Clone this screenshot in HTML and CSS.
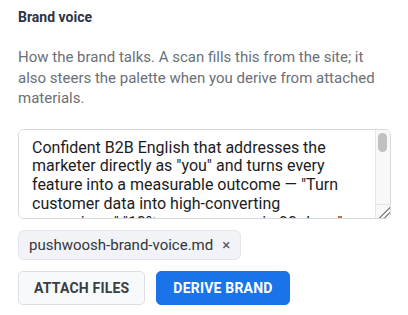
FILE: index.html
```html
<!DOCTYPE html>
<html>
<head>
    <meta charset="UTF-8">
    <title>Brand voice</title>

    <link rel="stylesheet" href="styles.css">
</head>
<body>
    <div class="field">
        <div class="label">Brand voice</div>
        <p class="hint">How the brand talks. A scan fills this from the site; it also steers the palette when you derive from attached materials.</p>
        <div class="voice">
            <textarea class="voice-text" rows="4">Confident B2B English that addresses the marketer directly as "you" and turns every feature into a measurable outcome — "Turn customer data into high-converting campaigns." "10% more revenue in 90 days." Short sentences, active verbs, no fluff.</textarea>
            <div class="scroll">
                <div class="thumb"></div>
                <div class="grip"></div>
            </div>
        </div>
        <div class="chips">
            <span class="chip">pushwoosh-brand-voice.md <span class="x">×</span></span>
        </div>
        <div class="actions">
            <button class="btn">Attach files</button>
            <button class="btn primary">Derive brand</button>
        </div>
    </div>
</body>
</html>
```

FILE: styles.css
```css
body {
    margin: 0;
    background: #fff;
    font-family: Roboto, "Liberation Sans", sans-serif;
}

.field {
    padding: 8px 17px 0 18px;
}

.label {
    font-size: 14px;
    font-weight: 700;
    color: #2d3446;
    line-height: 18px;
}

.hint {
    margin: 21px 0 0;
    font-size: 15px;
    line-height: 20.5px;
    color: #6b6f76;
}

.voice {
    display: flex;
    box-sizing: border-box;
    height: 90px;
    margin-top: 20px;
    border: 1px solid #d6d9de;
    border-radius: 6px;
    overflow: hidden;
}

.voice-text {
    flex: 1;
    min-width: 0;
    margin: 0;
    padding: 9px 12px 0 13px;
    border: none;
    outline: none;
    resize: none;
    overflow: hidden;
    font-family: Roboto, "Liberation Sans", sans-serif;
    font-size: 16px;
    line-height: 18.75px;
    color: #1c1c1e;
}

.scroll {
    width: 14px;
    display: flex;
    flex-direction: column;
    justify-content: space-between;
    background: #f8f8f8;
    border-left: 1px solid #e6e6e6;
}

.thumb {
    height: 19px;
    margin: 3px 3px 0 2px;
    border-radius: 5px;
    background: #c1c1c1;
}

.grip {
    height: 13px;
    border-top: 1px solid #e6e6e6;
    background:
        linear-gradient(135deg, transparent 56%, #8f8f8f 56%, #8f8f8f 63%, transparent 63%, transparent 76%, #8f8f8f 76%, #8f8f8f 83%, transparent 83%);
}

.chips {
    display: flex;
    margin-top: 11px;
}

.chip {
    display: inline-flex;
    align-items: center;
    gap: 9px;
    height: 30px;
    box-sizing: border-box;
    padding: 0 10px;
    background: #f1f3f6;
    border: 1px solid #e4e7eb;
    border-radius: 6px;
    font-size: 15px;
    color: #33363b;
}

.x {
    font-size: 15px;
    color: #555;
}

.actions {
    display: flex;
    gap: 11px;
    margin-top: 11px;
}

.btn {
    height: 34px;
    padding: 0 15px;
    background: #f8f9fa;
    border: 1px solid #dcdfe3;
    border-radius: 5px;
    font-family: Roboto, "Liberation Sans", sans-serif;
    font-size: 14px;
    font-weight: 700;
    letter-spacing: 0.2px;
    text-transform: uppercase;
    color: #3a3d42;
}

.btn.primary {
    padding: 0 16px;
    background: #1a73e8;
    border-color: #1a73e8;
    color: #fff;
}
```
